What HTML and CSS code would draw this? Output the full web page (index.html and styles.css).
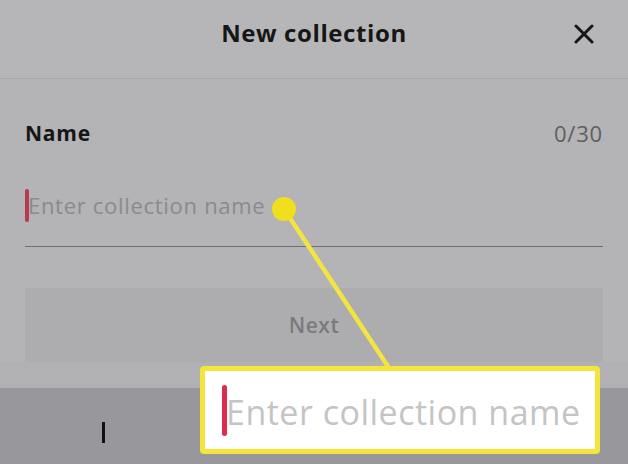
FILE: index.html
```html
<!DOCTYPE html>
<html lang="en">
<head>
<meta charset="utf-8">
<title>New collection</title>
<link rel="stylesheet" href="styles.css">
</head>
<body>
<div class="screen">
  <header class="header">
    <span class="spacer"></span>
    <h1 class="title">New collection</h1>
    <button class="close" aria-label="Close">
      <svg width="20" height="20" viewBox="0 0 20 20"><path d="M2 2 L18 18 M18 2 L2 18" stroke="#161616" stroke-width="3" stroke-linecap="round" fill="none"/></svg>
    </button>
  </header>
  <main class="content">
    <div class="name-row">
      <span class="label">Name</span>
      <span class="count">0/30</span>
    </div>
    <div class="input-row">
      <span class="caret"></span>
      <span class="placeholder">Enter collection name</span>
    </div>
    <div class="next-btn">Next</div>
  </main>
  <div class="strip"></div>
  <div class="keyboard">
    <span class="kb-caret"></span>
  </div>

  <svg class="annot" width="628" height="464" viewBox="0 0 628 464">
    <line x1="284" y1="209" x2="389" y2="368" stroke="#f3e444" stroke-width="4.5" stroke-linecap="round"/>
    <circle cx="284" cy="209" r="12" fill="#f1df1e"/>
  </svg>
  <div class="callout">
    <span class="callout-caret"></span>
    <span class="callout-text">Enter collection name</span>
  </div>
</div>
</body>
</html>
```

FILE: styles.css
```css
* { box-sizing: border-box; }
html, body { margin: 0; padding: 0; }
body {
  width: 628px;
  height: 464px;
  overflow: hidden;
  font-family: "Open Sans", "Noto Sans", sans-serif;
  background: #b4b3b5;
}
.screen {
  position: relative;
  width: 628px;
  height: 464px;
  display: flex;
  flex-direction: column;
}
.header {
  height: 79px;
  padding-top: 18px;
  display: grid;
  grid-template-columns: 1fr auto 1fr;
  align-items: start;
  border-bottom: 1px solid #a7a6a8;
  background: #b6b5b7;
}
.title {
  margin: 0;
  font-size: 24px;
  line-height: 30px;
  font-weight: 700;
  color: #161616;
  letter-spacing: 0.6px;
}
.close {
  justify-self: end;
  margin-right: 34px;
  margin-top: 6px;
  width: 20px;
  height: 20px;
  padding: 0;
  border: 0;
  background: none;
  display: flex;
}
.content {
  padding: 0 25px;
}
.name-row {
  margin-top: 42px;
  display: flex;
  justify-content: space-between;
  align-items: center;
  line-height: 24px;
}
.label {
  font-size: 21px;
  font-weight: 700;
  color: #161616;
  letter-spacing: 0.8px;
}
.count {
  font-size: 22px;
  color: #5f5e60;
  letter-spacing: 0.8px;
  margin-right: 0;
}
.input-row {
  margin-top: 40px;
  height: 62px;
  padding-bottom: 21px;
  display: flex;
  align-items: center;
  border-bottom: 1px solid #6f6e70;
}
.caret {
  width: 4px;
  height: 33px;
  border-radius: 2px;
  background: #b73a50;
}
.placeholder {
  font-size: 22px;
  color: #8b8a8c;
  margin-left: -1px;
  letter-spacing: 0.7px;
}
.next-btn {
  margin-top: 41px;
  height: 74px;
  background: #adacae;
  display: flex;
  align-items: center;
  justify-content: center;
  font-size: 21px;
  font-weight: 600;
  color: #7b7a7c;
  letter-spacing: 0.5px;
}
.strip {
  height: 26px;
  background: #b1b0b2;
}
.keyboard {
  flex: 1;
  background: #98979b;
  padding-left: 102px;
  padding-top: 34px;
}
.kb-caret {
  display: block;
  width: 3px;
  height: 21px;
  background: #111;
}
.annot {
  position: absolute;
  left: 0;
  top: 0;
  pointer-events: none;
}
.callout {
  position: absolute;
  left: 200px;
  top: 366px;
  width: 400px;
  height: 88px;
  background: #fff;
  border: 5px solid #f4e53c;
  border-radius: 4px;
  display: flex;
  align-items: center;
  padding-left: 17px;
}
.callout-caret {
  width: 5px;
  height: 51px;
  border-radius: 3px;
  background: #e02a4d;
}
.callout-text {
  font-size: 34px;
  line-height: 40px;
  padding-top: 4px;
  color: #c4c4c4;
  margin-left: -1px;
  letter-spacing: 0.5px;
}
```
